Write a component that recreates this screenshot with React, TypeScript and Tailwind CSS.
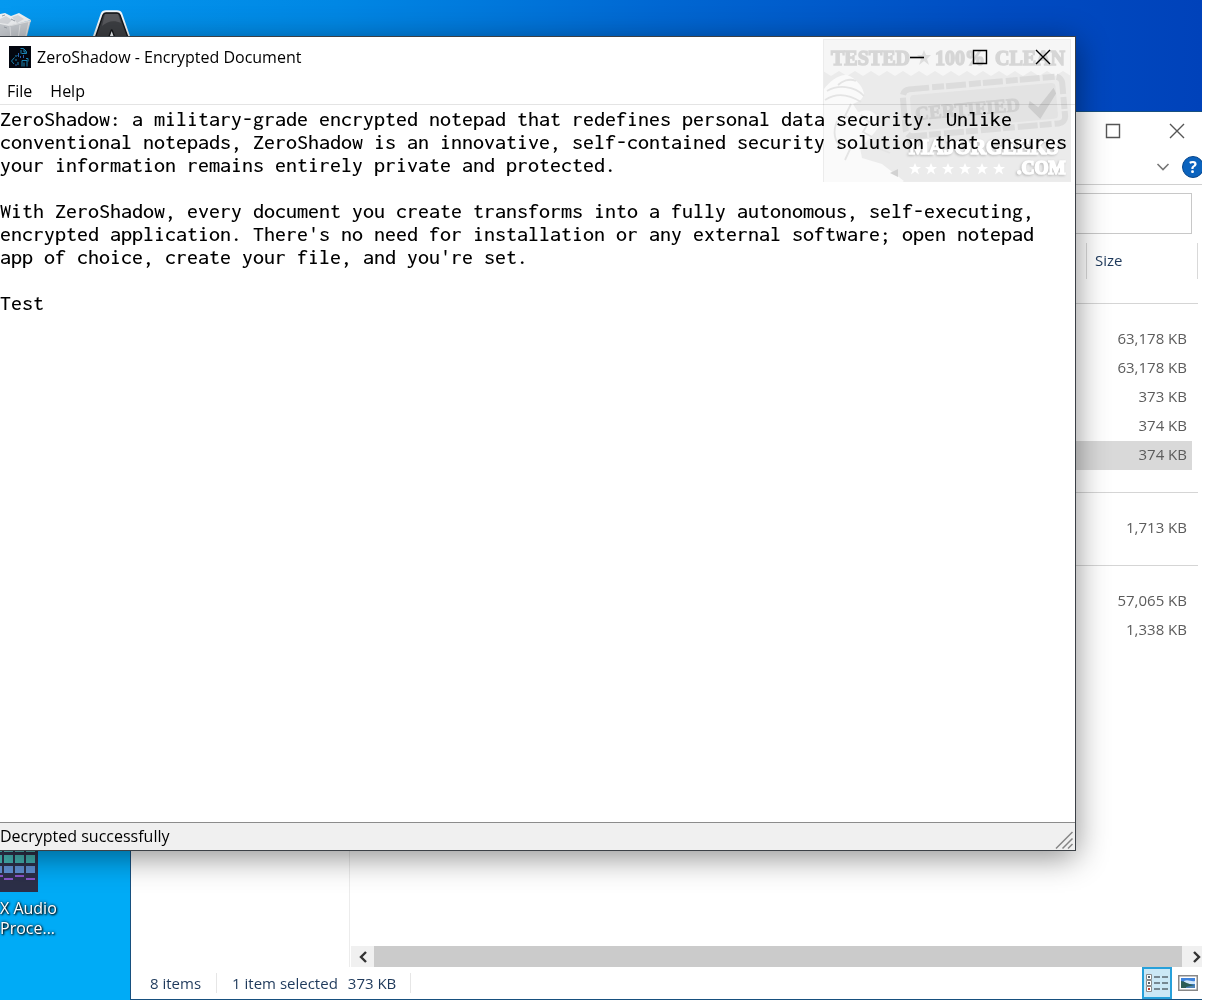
import { useState } from "react";

const documentText = `ZeroShadow: a military-grade encrypted notepad that redefines personal data security. Unlike
conventional notepads, ZeroShadow is an innovative, self-contained security solution that ensures
your information remains entirely private and protected.

With ZeroShadow, every document you create transforms into a fully autonomous, self-executing,
encrypted application. There's no need for installation or any external software; open notepad
app of choice, create your file, and you're set.

Test`;

const fileGroups = [
  [
    { size: "63,178 KB", selected: false },
    { size: "63,178 KB", selected: false },
    { size: "373 KB", selected: false },
    { size: "374 KB", selected: false },
    { size: "374 KB", selected: true },
  ],
  [{ size: "1,713 KB", selected: false }],
  [
    { size: "57,065 KB", selected: false },
    { size: "1,338 KB", selected: false },
  ],
];

function CloseGlyph() {
  return (
    <svg className="size-4" viewBox="0 0 16 16" fill="none" stroke="currentColor" strokeWidth="1.4" aria-hidden="true">
      <path d="M1 1 15 15M15 1 1 15" />
    </svg>
  );
}

function MaximizeGlyph() {
  return (
    <svg className="size-4" viewBox="0 0 16 16" fill="none" stroke="currentColor" strokeWidth="1.4" aria-hidden="true">
      <path d="M1.5 1.5h13v13h-13z" />
    </svg>
  );
}

function MinimizeGlyph() {
  return (
    <svg className="size-4" viewBox="0 0 16 16" fill="none" stroke="currentColor" strokeWidth="1.6" aria-hidden="true">
      <path d="M1 8.5h14" />
    </svg>
  );
}

function AppIcon() {
  return (
    <svg className="size-[22px] shrink-0" viewBox="0 0 22 22" fill="none" aria-hidden="true">
      <path d="M0 0h22v22H0z" fill="#03060f" />
      <g stroke="#1a84b4" strokeWidth="1">
        <path d="M11.500 2.500h3l3 3v2h-5M12 4v3.500M15 3v3h2" />
        <path d="M5.500 11.500 2.500 15l2.500 3M7 9v2m0 2v2m2-6v1m0 6v3" />
        <path d="M13 20.500v-6h5v6m-3-4v4M17 12.500h2v3" />
      </g>
      <path d="M9.500 7v4m2-1v2m3-3v3M6 19h2" stroke="#2a5fae" />
    </svg>
  );
}

function Stamp() {
  return (
    <svg className="block h-auto w-full" viewBox="0 0 248 143" aria-hidden="true">
      <path d="M0 0h248v143H0z" fill="#f6f6f6" />
      <path
        d="M0 32l8 5 8-5 8 5 8-5 8 5 8-5 8 5 8-5 8 5 8-5 8 5 8-5 8 5 8-5 8 5 8-5 8 5 8-5 8 5 8-5 8 5 8-5 8 5 8-5 8 5 8-5 8 5 8-5 8 5 8-5 8 5v106H0z"
        fill="#ebebeb"
      />
      <path d="M0 0h248v143H0z" fill="none" stroke="#ececec" strokeWidth="2" />
      <g fontFamily="Liberation Serif, serif" fontWeight="700" fontSize="20" fill="#d6d6d6" stroke="#d6d6d6" strokeWidth="1.4">
        <text x="8" y="26">TESTED</text>
        <text x="112" y="26">100%</text>
        <text x="172" y="26">CLEAN</text>
      </g>
      <path d="m101 11 2 5 5 0-4 4 2 6-5-4-5 4 2-6-4-4 5 0z" fill="#dedede" />
      <g transform="rotate(-5 160 68)">
        <rect x="81" y="44" width="160" height="47" rx="7" fill="none" stroke="#dcdcdc" strokeWidth="6" strokeDasharray="20 3 12 2" />
        <rect x="88" y="50" width="146" height="36" rx="4" fill="#e3e3e3" />
        <text x="92" y="75" fontFamily="Liberation Serif, serif" fontWeight="700" fontSize="19" fill="#d0d0d0" stroke="#d0d0d0">CERTIFIED</text>
        <path d="m207 66 8 7 17-18 2 6-18 24-11-13z" fill="#cdcdcd" />
      </g>
      <path
        d="M1 50c6-8 15-15 23-14 8 3 16 11 17 19-2 7-7 8-11 10l5 8c7-2 13-3 18 3l5 9-6 8-7 8-8 8 2 10 20 6 22 17-16 11H1z"
        fill="#fafafa"
      />
      <path
        d="M4 52c10-6 27-6 37 5M2 61c12-8 25-5 36 2M28 65l-6 12 8 3M38 76l8 7-6 10 9 5M28 108l-6 13M50 107l17 7M14 82c-4 10-3 20 5 27M33 42c-7-3-14 0-18 4"
        fill="none"
        stroke="#e4e4e4"
        strokeWidth="1.8"
      />
      <path d="m67 134 8-4v8z" fill="#d2d2d2" />
      <g
        className="[paint-order:stroke] drop-shadow-[-1px_1px_1px_#bbb]"
        fontFamily="Liberation Serif, serif"
        fontWeight="700"
        fill="#ffffff"
        stroke="#ffffff"
        strokeWidth="1.600"
      >
        <text x="86" y="115" fontSize="21">MAJORGEEKS</text>
        <text x="194" y="135" fontSize="18">.COM</text>
      </g>
      <g fill="#ffffff">
        {[92, 108, 125, 142, 159, 176].map((x) => (
          <path key={x} transform={`translate(${x} 130)`} d="m0-6 1.700 4h4.300l-3.500 2.700 1.500 4.800-4-2.900-4 2.900 1.500-4.800-3.500-2.700h4.300z" />
        ))}
      </g>
    </svg>
  );
}

function RecycleBin() {
  return (
    <svg className="h-10 w-8" viewBox="0 0 32 40" aria-hidden="true">
      <path d="M0 22 8 25 31 20 26 40H0z" fill="#c5c9ce" />
      <path d="M0 14 5 13 11 16 19 13 31 20 9 26 0 24z" fill="#eef0f2" />
      <path d="m0 19 6-3 6 4-4 4-8-1zM12 17l6-2 6 4-7 4z" fill="#d4d7db" />
      <path d="M9 26 31 21M10 27l1 13M20 25l-2 15M29 22l-4 18" stroke="#e4e6e8" fill="none" />
      <path d="m2 16 3-1M11 19l4 2M4 27l3 1" stroke="#9aa0a8" fill="none" />
    </svg>
  );
}

function LetterShortcut() {
  return (
    <svg className="h-10 w-10" viewBox="0 0 40 40" aria-hidden="true">
      <path d="M0 46 11 14Q12 11.500 15 11.500h11Q29 11.500 30 14L41 46z" fill="#33353a" stroke="#f3f7fa" strokeWidth="2.600" />
      <path d="M1.500 46 12 15q1-2 3-2h11q2 0 3 2L40 46z" fill="#3d3f43" stroke="#15171a" strokeWidth="1.400" />
      <path d="M14 14h13l3 9c-7-3-13-2-19 3z" fill="#58595d" />
      <path d="m16 42 4-11q.7-2 1.400 0l4 11z" fill="#f3f7fa" stroke="#15171a" strokeWidth="1.400" />
    </svg>
  );
}

function AudioIcon() {
  return (
    <svg className="h-11 w-[38px]" viewBox="0 0 38 44" aria-hidden="true">
      <path d="M0 0h38v44H0z" fill="#2c2f48" />
      <path d="M0 0h2v4H0zM0 7h2v8H0z" fill="#43b0ae" />
      <path d="M0 18h2v7H0z" fill="#5f8fd0" />
      {[4, 15, 26].map((x) => (
        <g key={x}>
          <path d={`M${x} 0h9v4h-9z`} fill="#4fb3b4" />
          <path d={`M${x} 7h9v8h-9z`} fill="#43b0ae" />
          <path d={`M${x} 18h9v7h-9z`} fill="#5f8fd0" />
        </g>
      ))}
      <path d="M0 28h3M15 28h9M4 31h9M26 31h9" stroke="#8a54c8" strokeWidth="2" />
    </svg>
  );
}

function DetailsIcon() {
  return (
    <svg className="h-[18px] w-[22px]" viewBox="0 0 22 18" fill="none" aria-hidden="true">
      {[0, 6, 12].map((y) => (
        <g key={y}>
          <path d={`M.5 ${y + 0.5}h5v5h-5z`} fill="#fff" stroke="#8a8a8a" />
          <path d={`M2 ${y + 2}h2v2H2z`} fill={y === 12 ? "#c0392b" : "#52606c"} />
          <path d={`M8 ${y + 3}h6M16 ${y + 3}h6`} stroke="#5b6770" strokeWidth="1.400" />
        </g>
      ))}
    </svg>
  );
}

function ThumbnailIcon() {
  return (
    <svg className="h-4 w-5" viewBox="0 0 20 16" aria-hidden="true">
      <path d="M.75.75h18.500v14.500H.75z" fill="#fff" stroke="#888" strokeWidth="1.500" />
      <path d="M3 3h14v10H3z" fill="#3f83dc" />
      <path d="M6 6c4-2 7 1 11 0v3H6z" fill="#cfe6fa" />
      <path d="M3 6c4 0 5 3 14 4v3H3z" fill="#2c5d55" />
      <path d="M8 12l9-2v3H8z" fill="#4e83b8" />
    </svg>
  );
}

function ExplorerWindow() {
  return (
    <section
      aria-label="File Explorer"
      className="absolute top-[111px] right-0 bottom-0 left-[130px] flex flex-col border border-r-0 border-[#17507f] bg-white text-[15px] text-[#1e395b]"
    >
      <div className="flex h-[38px] items-center justify-end gap-12 pr-[17px] text-[#555]">
        <button type="button" aria-label="Maximize File Explorer"><MaximizeGlyph /></button>
        <button type="button" aria-label="Close File Explorer"><CloseGlyph /></button>
      </div>
      <div className="flex h-[35px] items-center justify-end gap-3 overflow-hidden border-b border-[#d0d0d0]">
        <button type="button" aria-label="Expand the ribbon" className="text-[#777]">
          <svg className="h-2 w-[14px]" viewBox="0 0 14 8" fill="none" stroke="currentColor" strokeWidth="1.6" aria-hidden="true">
            <path d="m1.500 1 5.500 5.500L12.500 1" />
          </svg>
        </button>
        <button
          type="button"
          aria-label="Help"
          className="-mr-0.5 flex size-[22px] items-center justify-center rounded-full border border-[#07468c] bg-[#0b63be] text-base font-bold text-white"
        >
          ?
        </button>
      </div>
      <div className="pt-2 pr-2.5">
        <input aria-label="Search" className="block h-[41px] w-full border border-[#c8c8c8] bg-white px-2 outline-none" />
      </div>

      <div className="flex min-h-0 flex-1">
        <nav aria-label="Folders" className="w-[219px] shrink-0 border-r border-[#ececec]" />
        <div className="flex min-w-0 flex-1 flex-col pl-px">
          <div className="min-h-0 flex-1 overflow-hidden pr-1">
            <table className="w-full">
              <thead>
                <tr className="h-[47px] text-left">
                  <td />
                  <th scope="col" className="w-[112px] px-0 pt-1.5 font-normal">
                    <div className="flex h-9 items-center border-x border-[#d9d9d9] pl-2">Size</div>
                  </th>
                </tr>
              </thead>
              {fileGroups.map((files, group) => (
                <tbody key={group} className="text-[#5c5c5c]">
                  <tr className="h-11">
                    <td colSpan={2}>
                      <div className="h-px bg-[#d5d5d5]" />
                    </td>
                  </tr>
                  {files.map((file, row) => (
                    <tr key={row} className="h-[29px] text-right">
                      <td className="p-0">
                        <div className={file.selected ? "h-[29px] bg-[#d9d9d9]" : "h-[29px]"} />
                      </td>
                      <td className="p-0 pr-1.5">
                        <div className={file.selected ? "h-[29px] bg-[#d9d9d9] pr-[5px] leading-[27px]" : "h-[29px] pr-[5px] leading-[27px]"}>
                          {file.size}
                        </div>
                      </td>
                    </tr>
                  ))}
                </tbody>
              ))}
            </table>
          </div>
          <div className="flex h-[21px] items-stretch bg-[#f0f0f0] text-[#333]">
            <button type="button" aria-label="Scroll left" className="flex w-[23px] items-center justify-center">
              <svg className="h-3 w-2" viewBox="0 0 8 12" fill="none" stroke="currentColor" strokeWidth="2.400" aria-hidden="true">
                <path d="M7 1 2 6l5 5" />
              </svg>
            </button>
            <div className="flex-1 bg-[#cbcbcb]" />
            <button type="button" aria-label="Scroll right" className="flex w-5 items-center justify-end pr-px">
              <svg className="h-3 w-2" viewBox="0 0 8 12" fill="none" stroke="currentColor" strokeWidth="2.400" aria-hidden="true">
                <path d="m1 1 5 5-5 5" />
              </svg>
            </button>
          </div>
        </div>
      </div>

      <footer className="flex h-8 items-center pl-[19px]">
        <span>8 items</span>
        <span className="mx-[15px] h-5 border-l border-[#e6e6e6]" />
        <span>1 item selected</span>
        <span className="ml-2.5">373 KB</span>
        <span className="ml-[14px] h-5 border-l border-[#e6e6e6]" />
        <div className="ml-auto flex items-center gap-1.5 pr-1">
          <button
            type="button"
            aria-label="Details view"
            className="flex h-8 w-[30px] items-center justify-center border-2 border-[#26a0da] bg-[#cbe8f6]"
          >
            <DetailsIcon />
          </button>
          <button type="button" aria-label="Thumbnail view"><ThumbnailIcon /></button>
        </div>
      </footer>
    </section>
  );
}

function NotepadWindow() {
  const [text, setText] = useState(documentText);
  return (
    <section
      aria-label="ZeroShadow"
      className="absolute top-9 right-[126px] bottom-[149px] left-0 flex flex-col border-y border-r border-[#3b4046] bg-white text-base text-black shadow-[0_6px_30px_rgba(0,0,0,0.45)]"
    >
      <header className="flex h-10 shrink-0 items-center pl-[9px]">
        <AppIcon />
        <h1 className="ml-1.5">ZeroShadow - Encrypted Document</h1>
        <div className="relative z-10 ml-auto flex gap-[47px] pr-6">
          <button type="button" aria-label="Minimize"><MinimizeGlyph /></button>
          <button type="button" aria-label="Maximize"><MaximizeGlyph /></button>
          <button type="button" aria-label="Close"><CloseGlyph /></button>
        </div>
      </header>
      <div role="menubar" aria-label="Main menu" className="flex h-7 shrink-0 items-center gap-[18px] border-b border-[#e4e4e4] pl-[7px]">
        <button type="button" role="menuitem">File</button>
        <button type="button" role="menuitem">Help</button>
      </div>
      <textarea
        aria-label="Document"
        value={text}
        onChange={(event) => setText(event.target.value)}
        spellCheck={false}
        wrap="off"
        className="block min-h-0 flex-1 resize-none overflow-hidden bg-white pt-0.5 font-['Inconsolata','Noto_Sans_Mono_CJK_SC','Liberation_Mono',monospace] text-[22px] leading-[23px] font-medium outline-none"
      />
      <footer className="flex h-7 shrink-0 items-center justify-between border-t border-[#8c8c8c] bg-[#f0f0f0]">
        <span role="status" className="pb-0.5">Decrypted successfully</span>
        <svg className="mr-px h-5 w-5 self-end" viewBox="0 0 20 20" fill="none" stroke="#858585" strokeWidth="1.500" aria-hidden="true">
          <path d="M2 18.500 18.500 2M8.500 18.500l10-10M14 18.500l4.500-4.500" />
        </svg>
      </footer>
      <div className="pointer-events-none absolute top-[2px] right-[4px] w-[248px] mix-blend-multiply">
        <Stamp />
      </div>
    </section>
  );
}

export default function App() {
  return (
    <div className="h-screen overflow-hidden bg-white pr-[3px] pb-0.5 font-['Open_Sans','Noto_Sans',sans-serif]">
      <main className="relative h-full overflow-hidden bg-[#00abf6]">
        <div className="absolute inset-x-0 top-0 h-28 bg-[linear-gradient(90deg,#0499f0_0%,#0087e4_28%,#0067d2_55%,#004cc2_83%,#0042ba_100%)]" />
        <div className="absolute top-0 left-0"><RecycleBin /></div>
        <div className="absolute top-0 left-[91px]"><LetterShortcut /></div>
        <div className="absolute bottom-[62px] left-0 flex flex-col items-start text-base leading-5 text-white [text-shadow:1px_1px_2px_#000,0_0_3px_#000]">
          <AudioIcon />
          <span className="mt-1.5">X Audio</span>
          <span>Proce...</span>
        </div>
        <ExplorerWindow />
        <NotepadWindow />
      </main>
    </div>
  );
}
